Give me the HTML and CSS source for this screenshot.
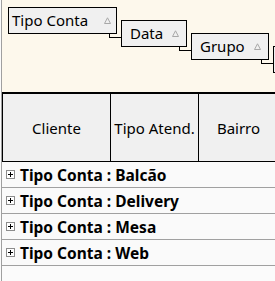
FILE: index.html
```html
<!DOCTYPE html>
<html lang="pt">
<head>
    <meta charset="UTF-8">
    <title>Grid</title>
    <link rel="stylesheet" href="styles.css">
</head>
<body>
    <div class="grid">
        <div class="group-panel">
            <div class="group-box box-tipo">
                <span>Tipo Conta</span>
                <svg class="sort" width="7" height="7" viewBox="0 0 7 7"><path d="M3.5 0.8 L6.5 6.5 L0.5 6.5 Z" fill="none" stroke="#a8a8a8" stroke-width="1"/></svg>
            </div>
            <div class="group-box step-1 box-data">
                <span>Data</span>
                <svg class="sort" width="7" height="7" viewBox="0 0 7 7"><path d="M3.5 0.8 L6.5 6.5 L0.5 6.5 Z" fill="none" stroke="#a8a8a8" stroke-width="1"/></svg>
            </div>
            <div class="group-box step-2 box-grupo">
                <span>Grupo</span>
                <svg class="sort" width="7" height="7" viewBox="0 0 7 7"><path d="M3.5 0.8 L6.5 6.5 L0.5 6.5 Z" fill="none" stroke="#a8a8a8" stroke-width="1"/></svg>
            </div>
            <div class="group-box step-3 box-next"></div>
        </div>
        <div class="header">
            <div class="col col-cliente">Cliente</div>
            <div class="col col-tipo">Tipo Atend.</div>
            <div class="col col-bairro">Bairro</div>
        </div>
        <div class="row"><span class="expand"></span><span class="row-text">Tipo Conta : Balcão</span></div>
        <div class="row"><span class="expand"></span><span class="row-text">Tipo Conta : Delivery</span></div>
        <div class="row"><span class="expand"></span><span class="row-text">Tipo Conta : Mesa</span></div>
        <div class="row"><span class="expand"></span><span class="row-text">Tipo Conta : Web</span></div>
    </div>
</body>
</html>
```

FILE: styles.css
```css
html, body {
    margin: 0;
    height: 100%;
    background: #fbfbfb;
    overflow: hidden;
}
body {
    font-family: "Noto Sans", "Open Sans", sans-serif;
    font-size: 15px;
    color: #000;
}
.grid {
    margin-left: 1px;
    border-left: 1px solid #a0a0a0;
    height: 100%;
    background: #fbfbfb;
}
.group-panel {
    height: 93px;
    box-sizing: border-box;
    padding: 7px 0 0 6px;
    background: #fdf8ec;
    border-bottom: 1px solid #000;
    display: flex;
    align-items: flex-start;
    gap: 4px;
    overflow: hidden;
}
.group-box {
    position: relative;
    flex: none;
    box-sizing: border-box;
    height: 27px;
    line-height: 25px;
    border: 1px solid #000;
    background: #f0f0f0;
    display: flex;
    justify-content: space-between;
    padding: 0 7px 0 8px;
}
.group-box .sort {
    margin-top: 9px;
}
.box-tipo {
    width: 109px;
    padding-left: 3px;
    padding-right: 5px;
}
.box-data {
    width: 66px;
}
.box-grupo {
    width: 78px;
}
.box-next {
    width: 80px;
}
.step-1 { margin-top: 13px; }
.step-2 { margin-top: 26px; }
.step-3 { margin-top: 39px; }
.step-1::before, .step-2::before, .step-3::before {
    content: "";
    position: absolute;
    left: -13px;
    top: 13px;
    width: 12px;
    height: 4px;
    box-sizing: border-box;
    border-left: 1px solid #000;
    border-bottom: 1px solid #000;
}
.header {
    display: flex;
    height: 69px;
    box-sizing: border-box;
    border-top: 1px solid #000;
    border-bottom: 1px solid #000;
    background: #f0f0f0;
}
.col {
    display: flex;
    align-items: center;
    justify-content: center;
    box-sizing: border-box;
    border-right: 1px solid #000;
    flex: none;
}
.col-cliente {
    width: 109px;
    border-left: 1px solid #000;
}
.col-tipo {
    width: 88px;
}
.col-bairro {
    width: 80px;
}
.row {
    height: 26px;
    box-sizing: border-box;
    border-bottom: 1px solid #a0a0a0;
    display: flex;
    align-items: center;
    gap: 5px;
    padding-left: 4px;
    background: #fafafa;
}
.expand {
    position: relative;
    width: 9px;
    height: 9px;
    box-sizing: border-box;
    border: 1px solid #8c8c8c;
    background: #fff;
    flex: none;
}
.expand::before {
    content: "";
    position: absolute;
    left: 1px;
    top: 3px;
    width: 5px;
    height: 1px;
    background: #000;
}
.expand::after {
    content: "";
    position: absolute;
    left: 3px;
    top: 1px;
    width: 1px;
    height: 5px;
    background: #000;
}
.row-text {
    font-size: 15.5px;
    font-weight: bold;
    padding-top: 1px;
}
```
